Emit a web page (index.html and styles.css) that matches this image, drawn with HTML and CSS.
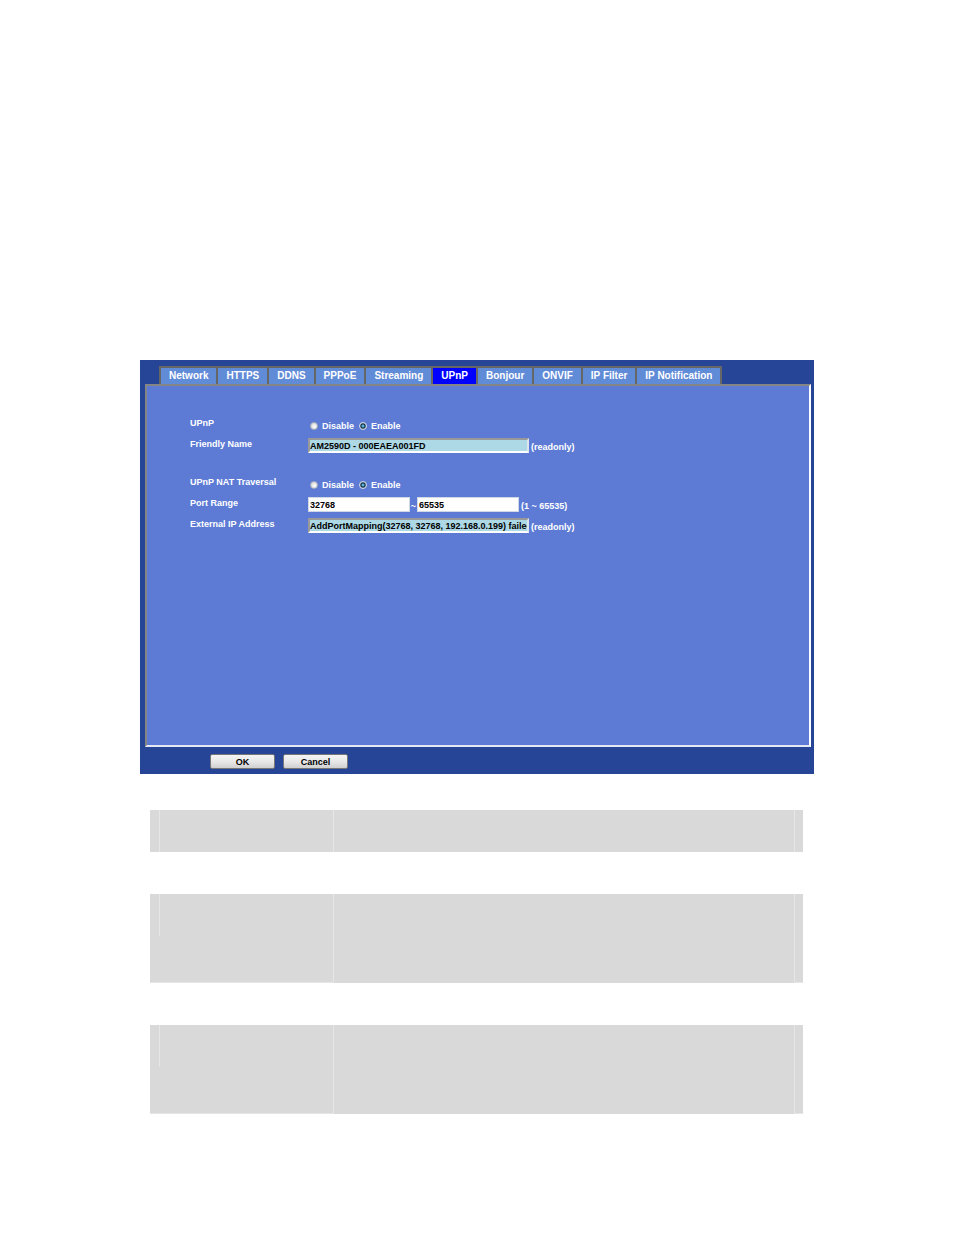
FILE: index.html
```html
<!DOCTYPE html>
<html lang="en">
  <head>
    <meta charset="utf-8">
    <title>Network - UPnP</title>
    <link rel="stylesheet" href="styles.css">
  </head>
  <body>

    <form class="panel">

      <nav class="tabs">
        <a href="#network">Network</a>
        <a href="#https">HTTPS</a>
        <a href="#ddns">DDNS</a>
        <a href="#pppoe">PPPoE</a>
        <a href="#streaming">Streaming</a>
        <a href="#upnp" class="active">UPnP</a>
        <a href="#bonjour">Bonjour</a>
        <a href="#onvif">ONVIF</a>
        <a href="#ip-filter">IP Filter</a>
        <a href="#ip-notification">IP Notification</a>
      </nav>

      <div class="content">

        <div class="group">
          <div class="row" role="radiogroup" aria-labelledby="upnp-label">
            <span class="name" id="upnp-label">UPnP</span>
            <div class="control radios">
              <label><input type="radio" name="upnp" value="0">Disable</label>
              <label><input type="radio" name="upnp" value="1" checked>Enable</label>
            </div>
          </div>
          <div class="row">
            <label class="name" for="friendly">Friendly Name</label>
            <div class="control">
              <input type="text" class="text readonly" id="friendly" value="AM2590D - 000EAEA001FD" readonly>
              <span class="hint">(readonly)</span>
            </div>
          </div>
        </div>

        <div class="group">
          <div class="row" role="radiogroup" aria-labelledby="nat-label">
            <span class="name" id="nat-label">UPnP NAT Traversal</span>
            <div class="control radios">
              <label><input type="radio" name="nat" value="0">Disable</label>
              <label><input type="radio" name="nat" value="1" checked>Enable</label>
            </div>
          </div>
          <div class="row">
            <label class="name" for="port-start">Port Range</label>
            <div class="control">
              <input type="text" class="text port" id="port-start" value="32768">
              <label class="tilde" for="port-end">~</label>
              <input type="text" class="text port" id="port-end" value="65535">
              <span class="hint">(1 ~ 65535)</span>
            </div>
          </div>
          <div class="row">
            <label class="name" for="external">External IP Address</label>
            <div class="control">
              <input type="text" class="text readonly" id="external" value="AddPortMapping(32768, 32768, 192.168.0.199) failed with code" readonly>
              <span class="hint">(readonly)</span>
            </div>
          </div>
        </div>

      </div>

      <div class="buttons">
        <button type="button">OK</button>
        <button type="reset">Cancel</button>
      </div>

    </form>

    <!-- Shaded rows -->
    <div class="bands">
      <div class="band">
        <div class="edge"></div>
        <div class="key"></div>
        <div class="value"></div>
        <div class="end"></div>
      </div>
      <div class="band tall">
        <div class="edge"></div>
        <div class="key"></div>
        <div class="value"></div>
        <div class="end"></div>
      </div>
      <div class="band tall">
        <div class="edge"></div>
        <div class="key"></div>
        <div class="value"></div>
        <div class="end"></div>
      </div>
    </div>

  </body>
</html>
```
FILE: styles.css
```css
* {
  box-sizing: border-box;
}

body {
  margin: 0;
  padding: 360px 140px 120px;
  background-color: #fff;
  font-family: "Liberation Sans", Arial, sans-serif;
  font-size: 9px;
  font-weight: bold;
  line-height: 12px;
}

.panel {
  padding: 6px 3px 5px 5px;
  background-color: #264596;
  color: #fff;
}

/* Tabs */

.tabs {
  display: flex;
  margin-left: 14px;
}

.tabs a {
  padding: 0 8px;
  border-top: 2px solid #666;
  border-left: 2px solid #666;
  background-color: #5f8bd7;
  color: #fff;
  font-size: 10px;
  line-height: 16px;
  text-decoration: none;
  white-space: nowrap;
}

.tabs a:last-child {
  border-right: 2px solid #666;
}

.tabs .active {
  background-color: #00f;
}

/* Settings */

.content {
  min-height: 363px;
  padding: 31px 43px;
  border: 2px solid;
  border-color: #858585 #fff #e4e8f4 #858585;
  background-color: #5d7bd5;
}

.group {
  margin-bottom: 17px;
}

.row {
  display: grid;
  grid-template-columns: 118px 1fr;
  height: 21px;
}

.control {
  display: flex;
  align-items: center;
  height: 15px;
}

.radios {
  gap: 5px;
  height: 17px;
  padding-left: 2px;
}

.radios label {
  display: flex;
  align-items: center;
  gap: 4px;
}

.radios input {
  appearance: none;
  width: 8px;
  height: 8px;
  margin: 0;
  border: 1px solid #a9b1bd;
  border-radius: 50%;
  background: radial-gradient(circle at 60% 60%, #fff, #ccc);
}

.radios input:checked {
  border-color: #d5dce5;
  background: radial-gradient(circle, #5fb4d8 15%, #123048 50%, #7890a5 80%);
}

.text {
  width: 221px;
  height: 15px;
  padding: 0 1px;
  border: 1px solid #d0d8e8;
  border-radius: 0;
  background-color: #fff;
  color: #000;
  font: inherit;
}

.readonly {
  padding: 0;
  border: 2px solid;
  border-color: #999 #dce4ee #fff #999;
  background-color: #add8e6;
}

.port {
  width: 102px;
}

.tilde {
  width: 7px;
  padding-top: 2px;
  text-align: center;
}

.hint {
  padding: 2px 0 0 2px;
}

/* Buttons */

.buttons {
  display: flex;
  gap: 8px;
  padding: 7px 0 0 65px;
}

.buttons button {
  width: 65px;
  height: 15px;
  padding: 0;
  border: 1px solid #777;
  border-radius: 2px;
  background: linear-gradient(#f5f5f5, #e8e8e8 50%, #d0d0d0);
  color: #000;
  font: inherit;
}

/* Shaded rows */

.bands {
  display: grid;
  gap: 42px;
  margin: 36px 11px 0 10px;
}

.band {
  display: grid;
  grid-template-columns: 9px 174fr 461fr 9px;
  height: 42px;
  background-color: #d9d9d9;
}

.band .key,
.band .value,
.band .end {
  border-left: 1px solid #e6e6e6;
}

.tall {
  height: 89px;
}

.tall .edge,
.tall .key,
.tall .end {
  border-bottom: 1px solid #e6e6e6;
}

.tall .key {
  border-left: none;
  background: linear-gradient(#e6e6e6, #e6e6e6) no-repeat 0 0 / 1px 42px;
}
```
